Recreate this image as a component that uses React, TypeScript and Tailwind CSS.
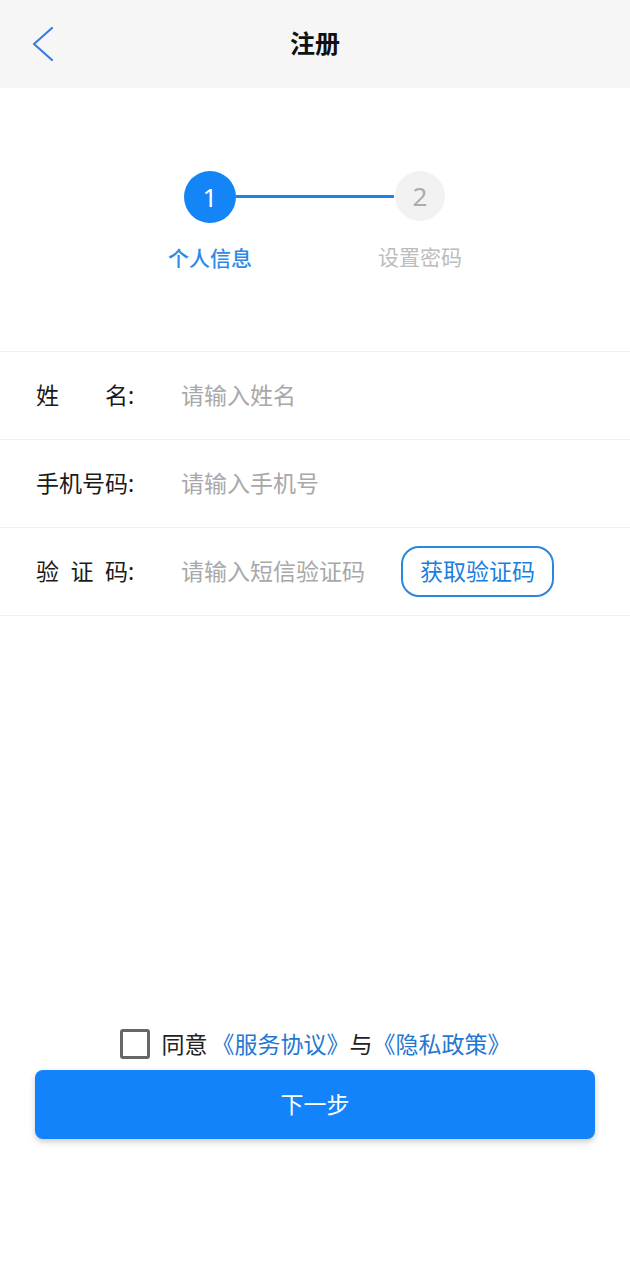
import { useState } from 'react';

const font = { fontFamily: '"Noto Sans", "Noto Sans CJK SC", sans-serif' };

interface Field {
  label: string[];
  placeholder: string;
  code?: boolean;
}

const fields: Field[] = [
  { label: ['姓', '名'], placeholder: '请输入姓名' },
  { label: ['手', '机', '号', '码'], placeholder: '请输入手机号' },
  { label: ['验', '证', '码'], placeholder: '请输入短信验证码', code: true },
];

const Step = ({ num, text, active }: { num: number; text: string; active: boolean }) => (
  <div className="flex flex-col items-center w-[52px]">
    <div
      className={
        active
          ? 'w-[52px] h-[52px] rounded-full bg-[#1485f7] text-white flex items-center justify-center text-[26px]'
          : 'w-[50px] h-[50px] rounded-full bg-[#f2f2f2] text-[#ababab] flex items-center justify-center text-[26px]'
      }
    >
      {num}
    </div>
    <span
      className={
        active
          ? 'mt-[21px] whitespace-nowrap text-[21px] leading-[28px] font-medium text-[#2d8ae6]'
          : 'mt-[22px] whitespace-nowrap text-[21px] leading-[28px] text-[#bcbcbc]'
      }
    >
      {text}
    </span>
  </div>
);

export default function App() {
  const [agree, setAgree] = useState(false);

  return (
    <div className="min-h-[1280px] flex flex-col bg-white" style={font}>
      <header className="h-[88px] bg-[#f6f6f6] flex items-center justify-center relative">
        <button className="absolute left-[26px] top-[22px] w-[34px] h-[44px]">
          <svg width="34" height="44" viewBox="0 0 34 44" fill="none">
            <polyline points="26,6 8,22 26,38" stroke="#3a7be0" strokeWidth="2.2" strokeLinecap="round" strokeLinejoin="round" />
          </svg>
        </button>
        <h1 className="text-[25px] font-bold text-[#111]">注册</h1>
      </header>

      <div className="h-[263px] pt-[83px] flex justify-center items-start">
        <Step num={1} text="个人信息" active />
        <div className="w-[158px] h-[3px] bg-[#1a83ea] mt-[24px]" />
        <Step num={2} text="设置密码" active={false} />
      </div>

      <div className="border-t border-[#eeeeee]">
        {fields.map((f) => (
          <div key={f.placeholder} className="h-[88px] border-b border-[#eeeeee] flex items-center pl-[36px]">
            <div className="w-[145px] flex items-center text-[23px] text-[#1a1a1a]">
              <span className="w-[92px] flex justify-between">
                {f.label.map((c) => (
                  <span key={c}>{c}</span>
                ))}
              </span>
              <span>:</span>
            </div>
            <input
              className="w-[220px] text-[23px] outline-none placeholder:text-[#a8a8a8]"
              placeholder={f.placeholder}
            />
            {f.code && (
              <button className="w-[153px] h-[51px] border-2 border-[#2b86e0] rounded-[18px] text-[23px] text-[#1a7fe0]">
                获取验证码
              </button>
            )}
          </div>
        ))}
      </div>

      <div className="flex-1" />

      <div className="pb-[141px]">
        <div className="flex items-center justify-center h-[30px]">
          <button
            onClick={() => setAgree(!agree)}
            className="w-[30px] h-[30px] border-[3px] border-[#666] rounded-[3px] mr-[12px] flex items-center justify-center text-[#1485f7]"
          >
            {agree ? '✓' : ''}
          </button>
          <span className="text-[23px] text-[#222] mr-[4px]">同意</span>
          <span className="text-[23px] text-[#1f78d1]">《服务协议》</span>
          <span className="text-[23px] text-[#222]">与</span>
          <span className="text-[23px] text-[#1f78d1]">《隐私政策》</span>
        </div>
        <div className="px-[35px] mt-[11px]">
          <button className="w-full h-[69px] bg-[#1283fa] rounded-lg text-white text-[23px] shadow-[0_3px_6px_rgba(0,0,0,0.2)]">
            下一步
          </button>
        </div>
      </div>
    </div>
  );
}
